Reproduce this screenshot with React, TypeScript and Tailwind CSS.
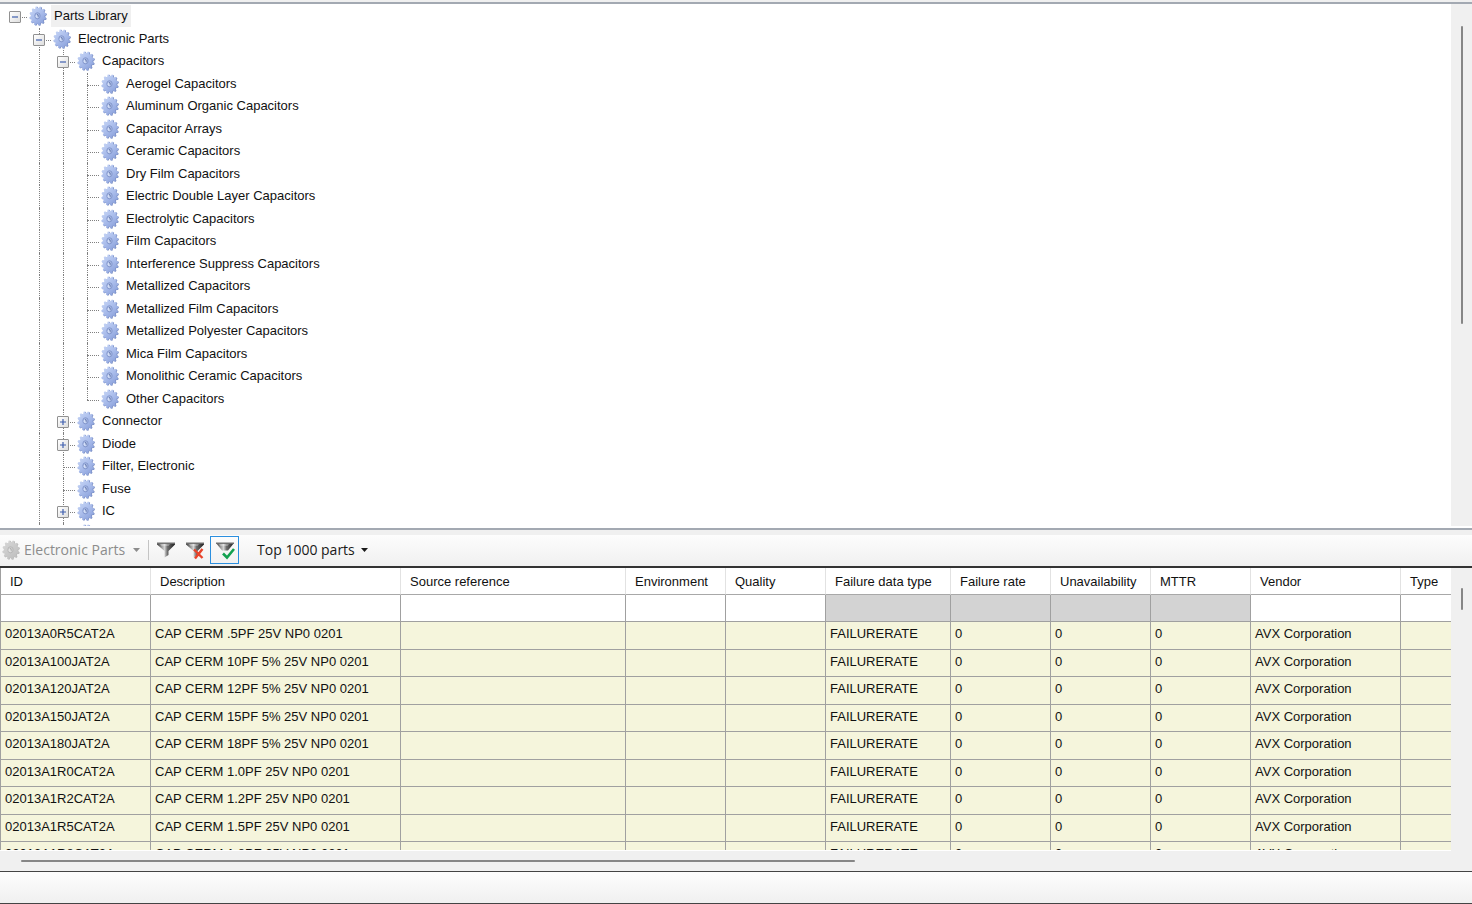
import type { ReactNode } from "react";

type TreeNode = {
  label: string;
  level: number;
  state?: "open" | "closed";
  last?: boolean;
};

const nodes: TreeNode[] = [
  { label: "Parts Library", level: 0, state: "open", last: true },
  { label: "Electronic Parts", level: 1, state: "open" },
  { label: "Capacitors", level: 2, state: "open" },
  { label: "Aerogel Capacitors", level: 3 },
  { label: "Aluminum Organic Capacitors", level: 3 },
  { label: "Capacitor Arrays", level: 3 },
  { label: "Ceramic Capacitors", level: 3 },
  { label: "Dry Film Capacitors", level: 3 },
  { label: "Electric Double Layer Capacitors", level: 3 },
  { label: "Electrolytic Capacitors", level: 3 },
  { label: "Film Capacitors", level: 3 },
  { label: "Interference Suppress Capacitors", level: 3 },
  { label: "Metallized Capacitors", level: 3 },
  { label: "Metallized Film Capacitors", level: 3 },
  { label: "Metallized Polyester Capacitors", level: 3 },
  { label: "Mica Film Capacitors", level: 3 },
  { label: "Monolithic Ceramic Capacitors", level: 3 },
  { label: "Other Capacitors", level: 3, last: true },
  { label: "Connector", level: 2, state: "closed" },
  { label: "Diode", level: 2, state: "closed" },
  { label: "Filter, Electronic", level: 2 },
  { label: "Fuse", level: 2 },
  { label: "IC", level: 2, state: "closed" },
  { label: "", level: 2 },
];

const columns = [
  { label: "ID", width: "w-[151px]" },
  { label: "Description", width: "w-[250px]" },
  { label: "Source reference", width: "w-[225px]" },
  { label: "Environment", width: "w-[100px]" },
  { label: "Quality", width: "w-[100px]" },
  { label: "Failure data type", width: "w-[125px]", locked: true },
  { label: "Failure rate", width: "w-[100px]", locked: true },
  { label: "Unavailability", width: "w-[100px]", locked: true },
  { label: "MTTR", width: "w-[100px]", locked: true },
  { label: "Vendor", width: "w-[150px]" },
  { label: "Type", width: "w-[100px]" },
];

const parts = [
  ["02013A0R5CAT2A", "CAP CERM .5PF 25V NP0 0201"],
  ["02013A100JAT2A", "CAP CERM 10PF 5% 25V NP0 0201"],
  ["02013A120JAT2A", "CAP CERM 12PF 5% 25V NP0 0201"],
  ["02013A150JAT2A", "CAP CERM 15PF 5% 25V NP0 0201"],
  ["02013A180JAT2A", "CAP CERM 18PF 5% 25V NP0 0201"],
  ["02013A1R0CAT2A", "CAP CERM 1.0PF 25V NP0 0201"],
  ["02013A1R2CAT2A", "CAP CERM 1.2PF 25V NP0 0201"],
  ["02013A1R5CAT2A", "CAP CERM 1.5PF 25V NP0 0201"],
  ["02013A1R8CAT2A", "CAP CERM 1.8PF 25V NP0 0201"],
];

const TEETH = 12;

// outline of the tilted cog: four points per tooth, slightly taller than wide
const gearPoints = Array.from({ length: TEETH * 4 }, (_, i) => {
  const offset = [-0.34, -0.17, 0.17, 0.34][i % 4];
  const angle = ((Math.floor(i / 4) + offset) / TEETH) * Math.PI * 2 + 0.15;
  const radius = i % 4 === 1 || i % 4 === 2 ? 1 : 0.82;
  return `${(Math.cos(angle) * radius * 8.4).toFixed(2)},${(Math.sin(angle) * radius * 9.6).toFixed(2)}`;
}).join(" ");

function IconDefs() {
  return (
    <svg className="absolute h-0 w-0" aria-hidden="true">
      <defs>
        <linearGradient id="gear-blue" x1="0" y1="0" x2="1" y2="1">
          <stop offset="0" stopColor="#cbd9f7" />
          <stop offset="0.5" stopColor="#a9bceb" />
          <stop offset="1" stopColor="#8299d6" />
        </linearGradient>
        <linearGradient id="gear-gray" x1="0" y1="0" x2="1" y2="1">
          <stop offset="0" stopColor="#d8d8d8" />
          <stop offset="1" stopColor="#bcbcbc" />
        </linearGradient>
        <linearGradient id="funnel" x1="0" y1="0" x2="1" y2="0">
          <stop offset="0" stopColor="#3a3a3a" />
          <stop offset="0.42" stopColor="#d4d4d4" />
          <stop offset="0.58" stopColor="#6e6e6e" />
          <stop offset="1" stopColor="#1c1c1c" />
        </linearGradient>
      </defs>
    </svg>
  );
}

function Gear({ muted = false }: { muted?: boolean }) {
  return (
    <svg viewBox="0 0 18 20" className="h-5 w-[18px] shrink-0" aria-hidden="true">
      <polygon points={gearPoints} transform="translate(9.5 10.3) rotate(10)" fill={muted ? "#b9b9b9" : "#7c90c6"} />
      <polygon points={gearPoints} transform="translate(8.7 9.9) rotate(10)" fill={muted ? "url(#gear-gray)" : "url(#gear-blue)"} />
      <ellipse cx="8.5" cy="9.8" rx="2.7" ry="3.1" fill={muted ? "#cccccc" : "#a3b5e2"} stroke={muted ? "#b4b4b4" : "#7e92c8"} strokeWidth="0.8" />
      <ellipse cx="8" cy="10.3" rx="1.4" ry="1.8" fill={muted ? "#e2e2e2" : "#d3dff8"} />
      <path d="M8 8.4q1.5.3 1.2 2.4" fill="none" stroke={muted ? "#a4a4a4" : "#53689f"} strokeWidth="0.9" />
    </svg>
  );
}

function Funnel({ short = false, children }: { short?: boolean; children?: ReactNode }) {
  return (
    <svg viewBox="0 0 20 20" className="h-5 w-5" aria-hidden="true">
      <path d={short ? "M1 3h18l-6 7.5H7z" : "M1 3h18v1.5L12.500 11v4l-4 2.500V11L1 4.500z"} fill="url(#funnel)" />
      <path d="M1 2.500h18v1.400H1z" fill="#707070" />
      <path d="M4 4.200h10l-1.500 1.600h-7z" fill="#ffffff" opacity="0.4" />
      {children}
    </svg>
  );
}

function Caret() {
  return (
    <svg viewBox="0 0 7 4" className="h-1 w-[7px]" aria-hidden="true">
      <path d="M0 0h7L3.500 4z" fill="currentColor" />
    </svg>
  );
}

function Expander({ open, label }: { open: boolean; label: string }) {
  return (
    <button
      type="button"
      aria-label={`${open ? "Collapse" : "Expand"} ${label}`}
      className="relative flex h-3 w-3 items-center justify-center rounded-[1px] border border-[#919191] bg-linear-to-br from-white to-[#dedede]"
    >
      <svg viewBox="0 0 8 8" className="h-2 w-2 shrink-0" stroke="#3f5fae" strokeWidth="1.2" aria-hidden="true">
        <path d={open ? "M1 4h6" : "M1 4h6M4 1v6"} />
      </svg>
    </button>
  );
}

function TreeRow({ node }: { node: TreeNode }) {
  const { label, level, state, last } = node;
  return (
    <li className="flex min-h-0 flex-1 items-center" role="treeitem" aria-level={level + 1} aria-selected={level === 0}>
      {Array.from({ length: level }, (_, i) => (
        <span key={i} className="flex w-6 shrink-0 self-stretch pl-3">
          {i > 0 && <span className="border-l border-dotted border-[#808080]" />}
        </span>
      ))}
      <span className="relative flex w-6 shrink-0 items-center self-stretch pl-[6px] pt-[2px]">
        {level > 0 && (
          <span className={`absolute left-3 top-0 border-l border-dotted border-[#808080] ${last ? "h-3" : "h-full"}`} />
        )}
        <span className="absolute left-3 right-0 top-3 border-t border-dotted border-[#808080]" />
        {state && <Expander open={state === "open"} label={label} />}
      </span>
      <span className="flex items-center pl-[2px]">
        <Gear />
        <span className={`ml-1 whitespace-nowrap px-[3px] leading-[22px] ${level === 0 ? "bg-[#f0f0f0]" : ""}`}>{label}</span>
      </span>
    </li>
  );
}

function PartsTree() {
  return (
    <section className="flex h-[58vh] shrink-0 overflow-hidden border-b-2 border-white bg-white">
      <div className="min-w-0 flex-1 overflow-hidden pt-px">
        <ul role="tree" aria-label="Parts library" className="flex h-[540px] flex-col pl-[3px]">
          {nodes.map((node, i) => (
            <TreeRow key={i} node={node} />
          ))}
        </ul>
      </div>
      <div className="flex w-[21px] justify-center bg-[#f0f0f0] pt-[22px]">
        <span className="h-[298px] w-[2px] rounded-full bg-[#868686]" />
      </div>
    </section>
  );
}

function Toolbar() {
  return (
    <div className="flex h-[31px] shrink-0 items-center bg-linear-to-b from-[#fdfdfd] to-[#f0f0f0] pb-[2px] pl-[2px] font-['Open_Sans',sans-serif] text-sm">
      <button type="button" disabled className="flex items-center text-[#8c8c8c]">
        <Gear muted />
        <span className="ml-1 mr-2">Electronic Parts</span>
        <Caret />
      </button>
      <span className="ml-2 h-5 w-px bg-[#c4c4c4]" />
      <button type="button" aria-label="Filter" className="ml-[6px] p-px">
        <Funnel />
      </button>
      <button type="button" aria-label="Clear filter" className="ml-[7px] p-px">
        <Funnel>
          <path d="M9 9.500l8.500 8.500M17.500 9l-7.500 9.500" stroke="#e8432a" strokeWidth="2.4" />
        </Funnel>
      </button>
      <button type="button" aria-label="Apply filter" aria-pressed="true" className="ml-1 flex h-7 w-[29px] items-center justify-center border border-[#2b8fdf]">
        <Funnel short>
          <path d="M8 13.500l4 4L19 9" fill="none" stroke="#12a150" strokeWidth="2.6" />
        </Funnel>
      </button>
      <button type="button" className="ml-[18px] flex items-center text-[#1a1a1a]">
        <span className="mr-[6px]">Top 1000 parts</span>
        <Caret />
      </button>
    </div>
  );
}

function PartsTable() {
  return (
    <table className="w-max table-fixed border-separate border-spacing-0 text-left">
      <thead>
        <tr className="h-[27px]">
          {columns.map((col) => (
            <th key={col.label} className={`${col.width} border-b border-r border-b-[#a8a8a8] border-r-[#e2e2e2] p-0 pl-[9px] pt-[2px] font-normal first:border-l first:border-l-[#a0a0a0]`}>
              {col.label}
            </th>
          ))}
        </tr>
        <tr className="h-[27px]">
          {columns.map((col) => (
            <td key={col.label} className={`border-b border-r border-[#a0a0a0] p-0 first:border-l ${col.locked ? "bg-[#d3d3d3]" : "bg-white"}`}>
              <input type="text" aria-label={`Filter ${col.label}`} disabled={col.locked} className="block h-5 w-full bg-transparent px-1 outline-none" />
            </td>
          ))}
        </tr>
      </thead>
      <tbody>
        {parts.map(([id, description]) => (
          <tr key={id} className="bg-[#f5f5dc] odd:h-7 even:h-[27px]">
            {[id, description, "", "", "", "FAILURERATE", "0", "0", "0", "AVX Corporation", ""].map((value, i) => (
              <td key={i} className="whitespace-nowrap border-b border-r border-[#a0a0a0] px-1 pb-[3px] pt-0 first:border-l">
                {value}
              </td>
            ))}
          </tr>
        ))}
      </tbody>
    </table>
  );
}

export default function App() {
  return (
    <main className="flex h-screen flex-col overflow-hidden bg-[#f0f0f0] font-['Liberation_Sans',Arial,sans-serif] text-[13px] leading-4 text-[#111]">
      <IconDefs />
      <div className="h-1 shrink-0 border-b-2 border-[#a3a9b2]" />
      <PartsTree />
      <div className="h-[7px] shrink-0 border-t-2 border-[#a3a9b2]" />
      <Toolbar />
      <section className="flex min-h-0 flex-1 flex-col border-t-2 border-[#333]">
        <div className="flex min-h-0 flex-1">
          <div className="min-w-0 flex-1 overflow-hidden border-b border-white bg-white">
            <PartsTable />
          </div>
          <div className="flex w-[21px] justify-center pt-5">
            <span className="h-[22px] w-[2px] rounded-full bg-[#868686]" />
          </div>
        </div>
        <div className="flex h-5 shrink-0 items-center pl-[21px] pr-[21px]">
          <span className="h-[2px] w-7/12 rounded-full bg-[#868686]" />
        </div>
      </section>
      <footer className="h-[33px] shrink-0 border-y border-[#444] bg-linear-to-b from-[#fdfdfd] to-[#f0f0f0]" />
    </main>
  );
}
